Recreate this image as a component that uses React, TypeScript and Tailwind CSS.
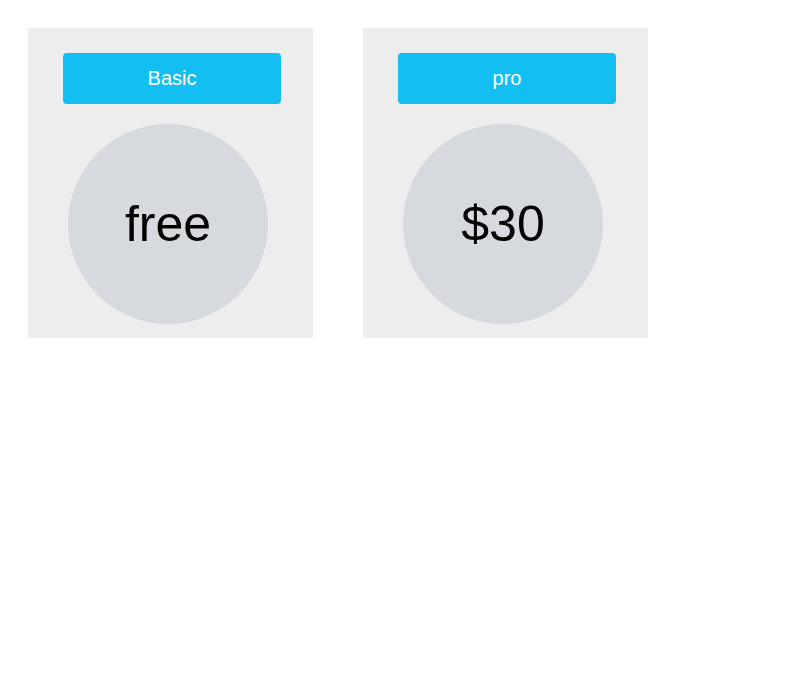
const plans = [
  { name: "Basic", price: "free" },
  { name: "pro", price: "$30" },
]

const PlanCard = ({ name, price }: { name: string; price: string }) => {
  return (
    <div className="w-[285px] h-[310px] bg-[#ededed] pt-[25px] pl-[35px]">
      <div className="w-[218px] h-[51px] rounded bg-[#13bff2] flex items-center justify-center pb-[2px] text-white text-[20px]">
        {name}
      </div>
      <div className="ml-[5px] mt-[20px] w-[200px] h-[200px] rounded-full bg-[#d6d9de] flex items-center justify-center text-[50px] text-black">
        {price}
      </div>
    </div>
  )
}

const App = () => {
  return (
    <div className="min-h-screen bg-white p-[28px] flex gap-[50px] items-start font-['Liberation_Sans',Arial,sans-serif]">
      {plans.map((p) => (
        <PlanCard key={p.name} name={p.name} price={p.price} />
      ))}
    </div>
  )
}

export default App
